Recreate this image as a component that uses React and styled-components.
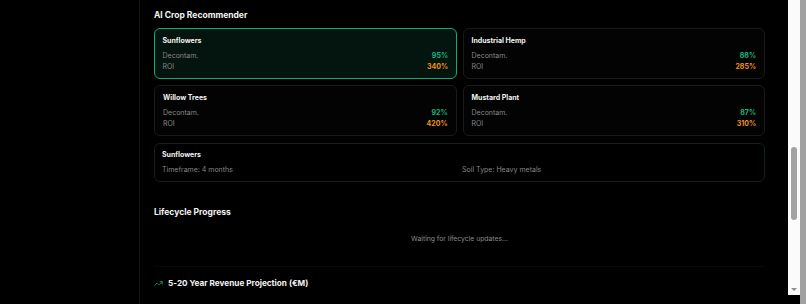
import React from "react";
import styled, { createGlobalStyle } from "styled-components";
import { TrendingUp } from "lucide-react";

const GlobalStyle = createGlobalStyle`
  html, body { margin: 0; padding: 0; background: #000; }
  body { font-family: Inter, "Noto Sans", "Liberation Sans", sans-serif; -webkit-font-smoothing: antialiased; }
  * { box-sizing: border-box; }
`;

const Frame = styled.div`
  display: flex;
  width: 806px;
  height: 304px;
  overflow: hidden;
  background: #000;
`;

const Main = styled.div`
  flex: 1;
  display: flex;
  padding: 0 9px 0 139px;
  overflow: hidden;
`;

const Panel = styled.div`
  width: 640px;
  border-left: 1px solid #141414;
  padding: 9px 14px 0 14px;
  display: flex;
  flex-direction: column;
`;

const Heading = styled.h2`
  margin: 0 0 ${(p) => p.$mb || 0}px 0;
  font-size: ${(p) => p.$size || 8.5}px;
  line-height: ${(p) => p.$lh || 12}px;
  font-weight: 700;
  color: #f4f4f4;
  display: flex;
  align-items: center;
  gap: 5px;
`;

const CropGrid = styled.div`
  display: grid;
  grid-template-columns: 1fr 1fr;
  grid-auto-rows: 51px;
  gap: 6px;
`;

const CropCard = styled.div`
  border-radius: 6px;
  padding: ${(p) => (p.$active ? "6.5px 7.5px 0 7.5px" : "7px 8px 0 8px")};
  border: ${(p) => (p.$active ? "1.5px solid #17a874" : "1px solid #1a1a1a")};
  background: ${(p) => (p.$active ? "#04140e" : "#030303")};
`;

const CardTitle = styled.div`
  font-size: 7px;
  line-height: 10px;
  font-weight: 700;
  color: #f2f2f2;
  margin-bottom: ${(p) => p.$mb ?? 4}px;
`;

const Row = styled.div`
  display: flex;
  justify-content: space-between;
  align-items: center;
  font-size: 7px;
  line-height: 11px;
`;

const Label = styled.span`
  color: #868686;
`;

const Value = styled.span`
  font-weight: 700;
  color: ${(p) => (p.$tone === "green" ? "#12b981" : "#f0950c")};
`;

const DetailCard = styled.div`
  margin-top: 7px;
  border: 1px solid #0d241c;
  border-radius: 6px;
  padding: 6px 8px 6px 7px;
`;

const DetailGrid = styled.div`
  display: grid;
  grid-template-columns: 1fr 1fr;
  gap: 6px;
  font-size: 7px;
  line-height: 11px;
  color: #868686;
`;

const Section = styled.section`
  margin-top: 24px;
`;

const Waiting = styled.div`
  text-align: center;
  font-size: 6.8px;
  line-height: 11px;
  color: #8a8a8a;
  padding: 15.5px 0 0 0;
`;

const RevenueSection = styled.section`
  margin-top: 22px;
  border-top: 1px solid #090909;
  padding-top: 10px;
`;

const ScrollTrack = styled.div`
  width: 12px;
  height: 295px;
  background: #fbfbfb;
  display: flex;
  flex-direction: column;
  align-items: center;
  padding-top: 147px;
`;

const Thumb = styled.div`
  width: 6px;
  height: 73px;
  border-radius: 3px;
  background: #a3a3a3;
`;

const Spacer = styled.div`
  flex: 1;
`;

const ArrowDown = styled.div`
  width: 0;
  height: 0;
  border-left: 3px solid transparent;
  border-right: 3px solid transparent;
  border-top: 3px solid #8c8c8c;
  margin-bottom: 4px;
`;

const OuterStrip = styled.div`
  width: 6px;
  height: 304px;
  background: #a1a1a1;
`;

const crops = [
  { name: "Sunflowers", decon: "95%", roi: "340%", active: true },
  { name: "Industrial Hemp", decon: "88%", roi: "285%" },
  { name: "Willow Trees", decon: "92%", roi: "420%" },
  { name: "Mustard Plant", decon: "87%", roi: "310%" },
];

export default function App() {
  return (
    <>
      <GlobalStyle />
      <Frame>
        <Main>
          <Panel>
            <Heading $mb={7}>AI Crop Recommender</Heading>
            <CropGrid>
              {crops.map((c) => (
                <CropCard key={c.name} $active={c.active}>
                  <CardTitle>{c.name}</CardTitle>
                  <Row>
                    <Label>Decontam.</Label>
                    <Value $tone="green">{c.decon}</Value>
                  </Row>
                  <Row>
                    <Label>ROI</Label>
                    <Value $tone="orange">{c.roi}</Value>
                  </Row>
                </CropCard>
              ))}
            </CropGrid>
            <DetailCard>
              <CardTitle $mb={3.5}>Sunflowers</CardTitle>
              <DetailGrid>
                <span>Timeframe: 4 months</span>
                <span>Soil Type: Heavy metals</span>
              </DetailGrid>
            </DetailCard>
            <Section>
              <Heading>Lifecycle Progress</Heading>
              <Waiting>Waiting for lifecycle updates...</Waiting>
            </Section>
            <RevenueSection>
              <Heading $size={8.2} $lh={13}>
                <TrendingUp size={9} color="#16a34a" strokeWidth={2.2} />
                5-20 Year Revenue Projection (€M)
              </Heading>
            </RevenueSection>
          </Panel>
        </Main>
        <ScrollTrack>
          <Thumb />
          <Spacer />
          <ArrowDown />
        </ScrollTrack>
        <OuterStrip />
      </Frame>
    </>
  );
}
